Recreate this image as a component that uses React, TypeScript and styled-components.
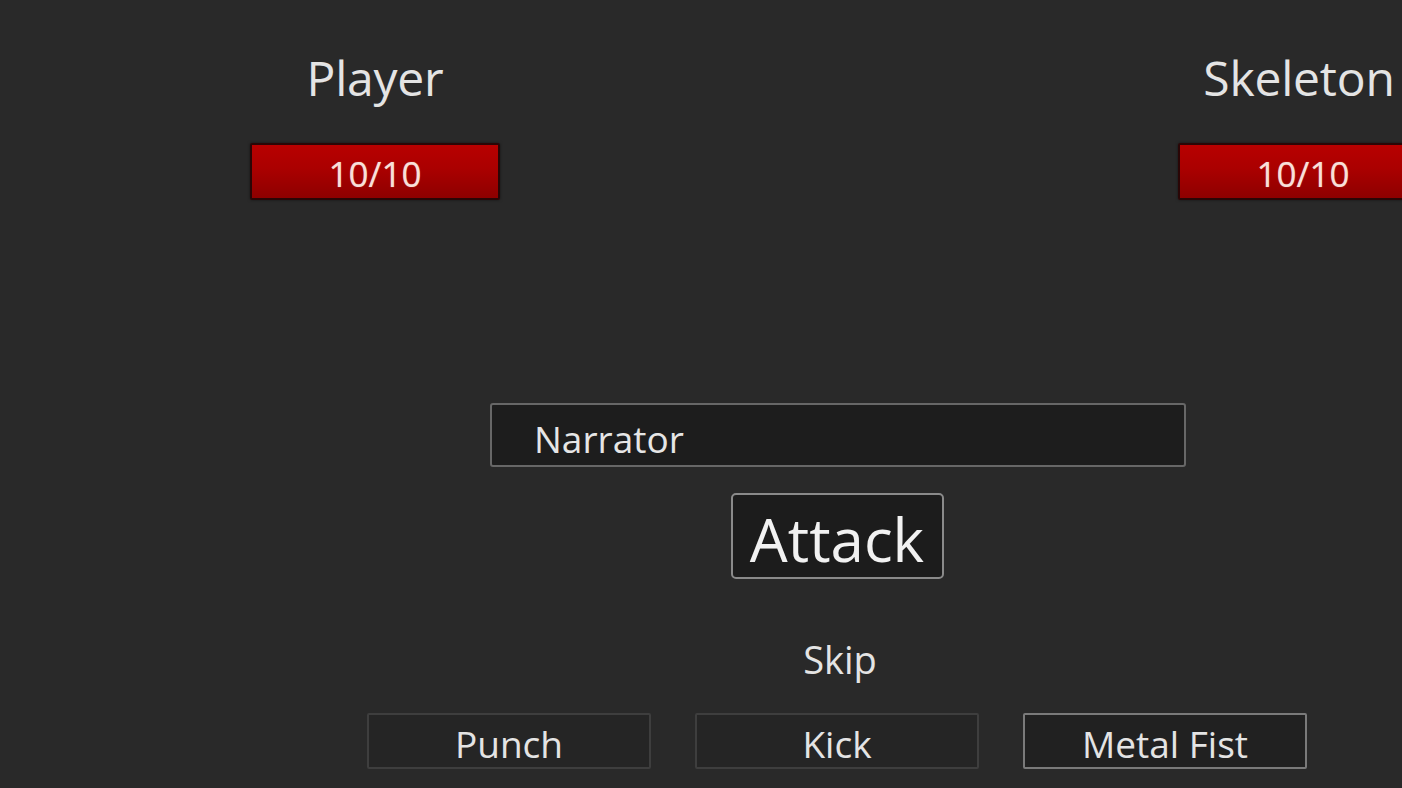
import React from "react";
import styled, { createGlobalStyle } from "styled-components";

const Global = createGlobalStyle`
  html, body {
    margin: 0;
    padding: 0;
    background: #292929;
    overflow: hidden;
  }
  body {
    font-family: "Open Sans", "Noto Sans", sans-serif;
    color: #e8e8e8;
  }
`;

const Screen = styled.div`
  width: 1402px;
  height: 788px;
  background: #292929;
  overflow: hidden;
  display: flex;
  flex-direction: column;
`;

const FighterRow = styled.div`
  display: flex;
  padding-top: 50px;
  padding-left: 250px;
  gap: 678px;
`;

const Fighter = styled.div`
  width: 250px;
  flex: none;
  display: flex;
  flex-direction: column;
  align-items: center;
`;

const Name = styled.div<{ $shift?: number }>`
  font-size: 48px;
  line-height: 56px;
  height: 56px;
  color: #e4e4e4;
  white-space: nowrap;
  letter-spacing: -0.2px;
  margin-right: ${(p) => p.$shift ?? 0}px;
`;

const HealthBar = styled.div`
  margin-top: 37px;
  width: 250px;
  height: 57px;
  box-sizing: border-box;
  border: 2px solid #2a0606;
  border-radius: 2px;
  background: linear-gradient(#b80000 0%, #aa0000 45%, #8e0000 100%);
  box-shadow: 0 0 3px rgba(0, 0, 0, 0.5);
  display: flex;
  align-items: center;
  justify-content: center;
  padding-top: 5px;
  font-size: 35px;
  line-height: 48px;
  color: #f8e0da;
  text-shadow: 0 0 1px rgba(255, 220, 210, 0.6);
`;

const Console = styled.div`
  margin-top: 203px;
  margin-left: 367px;
  width: 940px;
  display: flex;
  flex-direction: column;
  align-items: center;
`;

const Narrator = styled.div`
  width: 696px;
  height: 64px;
  box-sizing: border-box;
  border: 2px solid #676767;
  border-radius: 3px;
  background: #1d1d1d;
  padding: 9px 0 0 42px;
  margin-left: 2px;
  font-size: 37px;
  line-height: 50px;
  color: #e6e6e6;
`;

const AttackButton = styled.div`
  margin-top: 26px;
  width: 213px;
  height: 86px;
  box-sizing: border-box;
  border: 2px solid #8a8a8a;
  border-radius: 5px;
  background: #1c1c1c;
  display: flex;
  align-items: center;
  justify-content: center;
  padding-top: 5px;
  font-size: 60px;
  line-height: 80px;
  color: #f2f2f2;
`;

const Skip = styled.div`
  margin-top: 54px;
  height: 52px;
  font-size: 38px;
  line-height: 52px;
  color: #e4e4e4;
  padding-left: 6px;
`;

const MoveRow = styled.div`
  margin-top: 28px;
  display: flex;
  gap: 44px;
`;

const Move = styled.div<{ $active?: boolean }>`
  width: 284px;
  height: 56px;
  box-sizing: border-box;
  border: 2px solid ${(p) => (p.$active ? "#7a7a7a" : "#3e3e3e")};
  border-radius: 2px;
  background: ${(p) => (p.$active ? "#212121" : "#252525")};
  display: flex;
  align-items: center;
  justify-content: center;
  padding-top: 5px;
  font-size: 37px;
  line-height: 48px;
  color: #e4e4e4;
`;

export default function App() {
  return (
    <>
      <Global />
      <Screen>
        <FighterRow>
          <Fighter>
            <Name>Player</Name>
            <HealthBar>10/10</HealthBar>
          </Fighter>
          <Fighter>
            <Name $shift={8}>Skeleton</Name>
            <HealthBar>10/10</HealthBar>
          </Fighter>
        </FighterRow>
        <Console>
          <Narrator>Narrator</Narrator>
          <AttackButton>Attack</AttackButton>
          <Skip>Skip</Skip>
          <MoveRow>
            <Move>Punch</Move>
            <Move>Kick</Move>
            <Move $active>Metal Fist</Move>
          </MoveRow>
        </Console>
      </Screen>
    </>
  );
}
